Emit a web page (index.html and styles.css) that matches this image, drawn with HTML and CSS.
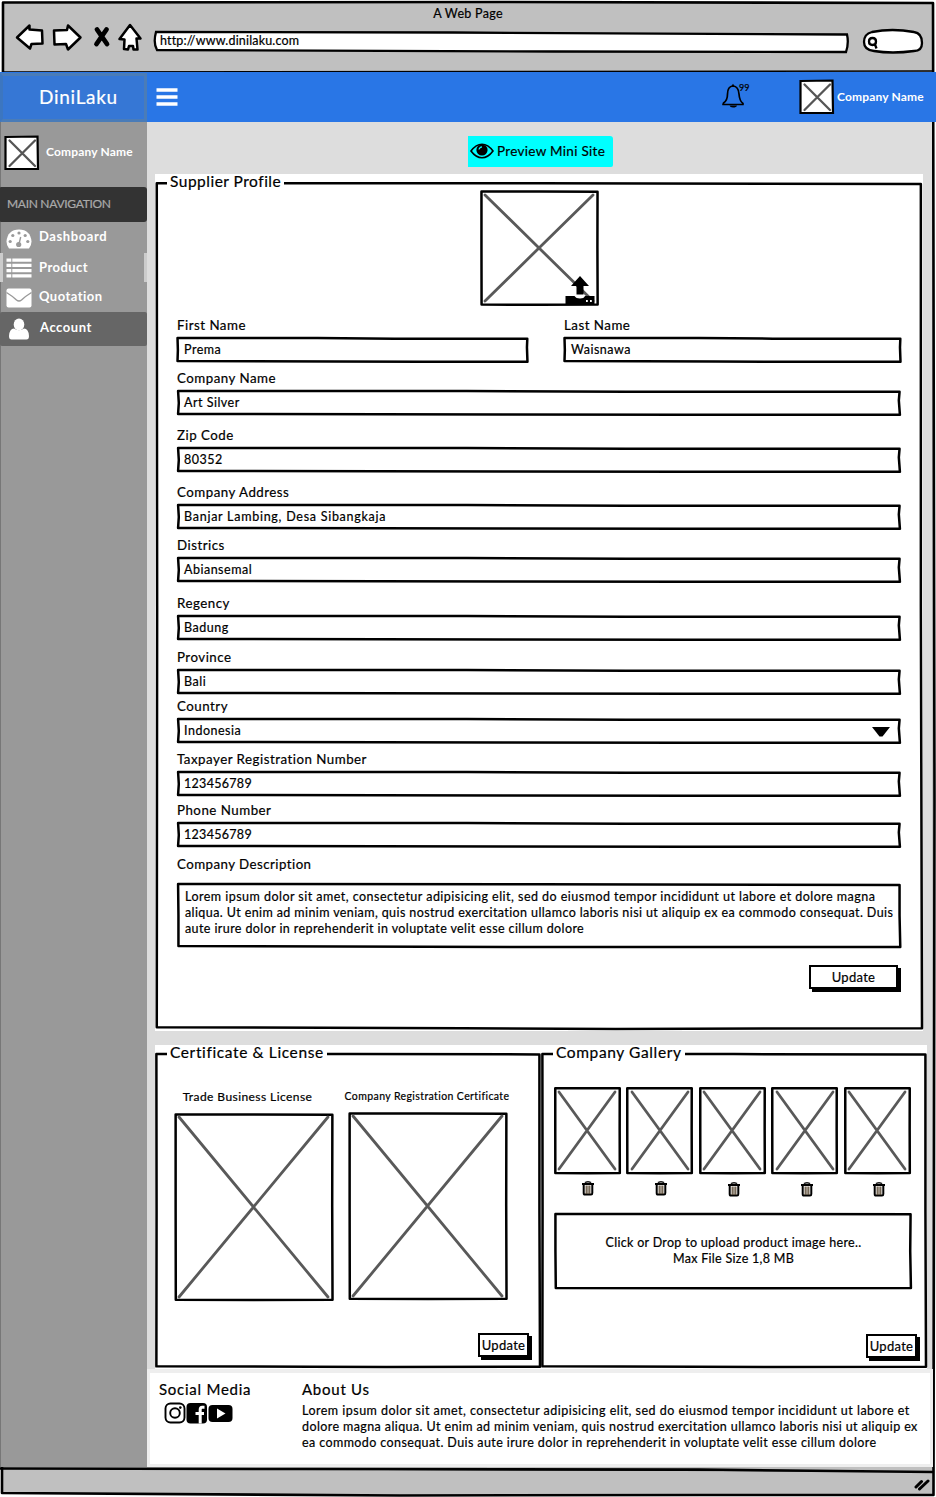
FILE: index.html
```html
<!DOCTYPE html>
<html lang="en">
<head>
<meta charset="utf-8">
<title>A Web Page</title>
<link rel="stylesheet" href="styles.css">
</head>
<body>
<svg class="defs" aria-hidden="true">
  <symbol id="field" viewBox="0 0 100 100" preserveAspectRatio="none">
    <path class="ink" d="M.15 4L40 4L62 6.500L99.800 7L99.700 40L99.850 95.500L70 95.500L45 94L.15 92L.25 50Z"/>
  </symbol>
  <symbol id="box" viewBox="0 0 100 100" preserveAspectRatio="none">
    <path class="ink" d="M.4 1.300L50 1.300L99.600 1.500L99.500 50L99.700 98.800L50 99L.5 98.800L.4 50Z"/>
  </symbol>
  <symbol id="wide" viewBox="0 0 100 100" preserveAspectRatio="none">
    <path class="ink" d="M.15 1.500L50 2L99.800 3L99.800 50L99.900 98.500L50 98.500L.2 97L.2 50Z"/>
  </symbol>
  <symbol id="frame" viewBox="0 0 100 100" preserveAspectRatio="none">
    <path class="ink" d="M.1 .03L50 .03L99.850 .12L99.850 50L100 99.900L60 100L40 99.900L.1 99.800L.15 50Z"/>
  </symbol>
  <symbol id="cross" viewBox="0 0 100 100" preserveAspectRatio="none">
    <path class="ink grey" d="M0 0L100 100M100 0L0 100"/>
  </symbol>
  <symbol id="trash" viewBox="0 0 14 15">
    <path d="M4.500 3V1.300Q7 .1 9.500 1.300V3" fill="none" stroke="#222" stroke-width="1.400"/>
    <path d="M1 3H13M2.700 4V12Q2.700 13.600 4 13.600H10Q11.300 13.600 11.300 12V4" fill="none" stroke="#000" stroke-width="2"/>
    <path d="M5.200 4.500V13M7 4.500V13M8.800 4.500V13" stroke="#4a3820" stroke-width="1.100"/>
  </symbol>
</svg>

<div class="window">
  <svg class="window-frame" viewBox="0 0 936 1497">
    <path d="M3 2.500L500 2L933 3L934.500 800L933.500 1495L700 1495L400 1495.500L2 1493Z" fill="#c0c0c0" stroke="#000" stroke-width="2.600" stroke-linejoin="round"/>
    <path d="M2 72L933 71" stroke="#000" stroke-width="1.500"/>
    <path d="M0 1468.500L300 1469L700 1469.500L934 1472" stroke="#000" stroke-width="2.500"/>
  </svg>

  <div class="chrome">
    <div class="chrome-title">A Web Page</div>
    <div class="toolbar">
      <svg class="nav-icons" viewBox="0 0 130 32">
        <g fill="#fff" stroke="#000" stroke-width="2.500" stroke-linejoin="round">
          <path d="M2 16.500L14.500 4.500V8.500L27 9.500L27.500 22.500L16.500 23L15 27.500Z"/>
          <path d="M39 9.500L52 9L53 4.500L65.500 16.500L53 28.500L51 23L39.500 23.500Z"/>
          <path d="M115 4L125.500 17.500H121.500L122.500 28.500H118.500L118 25H114L113 28.500L109 28L109.500 18.500L104.500 18Z"/>
        </g>
        <path d="M82 8.500L92 23M91.500 8.500L81.500 23" stroke="#000" stroke-width="4.800" stroke-linecap="round"/>
      </svg>
      <div class="url">
        <svg class="outline" viewBox="0 0 696 22" preserveAspectRatio="none"><path d="M3 1L300 1.500L694 3.500Q696 12 693 21L400 20.500L4 19Q0 12 3 1Z" fill="#fff" stroke="#000" stroke-width="2.300"/></svg>
        <span>http://www.dinilaku.com</span>
      </div>
      <svg class="search" viewBox="0 0 62 26">
        <path d="M10 4Q30 0 52 4Q60 5 60 15Q60 23 52 23Q30 26 12 23Q2 22 2 14Q2 6 10 4Z" fill="#fff" stroke="#000" stroke-width="2.300"/>
        <path d="M7 13.500Q7 10 10.500 10Q14 10 14 13.500Q14 17 10.500 17Q7 17 7 13.500ZM13 16.500L14.500 20.500" fill="none" stroke="#000" stroke-width="2.300"/>
      </svg>
    </div>
  </div>

  <header class="topbar">
    <div class="brand">DiniLaku</div>
    <svg class="burger" viewBox="0 0 22 18"><path d="M.5 2H21.500M.5 9H21.500M.5 16H21.500" stroke="#fff" stroke-width="3.400"/></svg>
    <svg class="bell" viewBox="0 0 30 28">
      <path d="M2.500 20Q6.500 17.500 6.500 11Q6.500 3.500 12 3Q17.500 3.500 18 11Q18.500 18 22 20.500L22 21.500L2 21.500Z" fill="none" stroke="#000" stroke-width="1.700" stroke-linejoin="round"/>
      <path d="M10.500 3L12 .8L13.500 3ZM8.500 22.500H16Q15.500 24.500 12 24.500Q9 24.500 8.500 22.500Z"/>
    </svg>
    <span class="count">99</span>
    <svg class="avatar" viewBox="0 0 36 36"><path d="M1.500 2L33.500 1.500L34 34L1.500 34Z" fill="#fff" stroke="#000" stroke-width="2.200"/><path d="M5.500 5.500L31 31M31 5.500L5.500 31" stroke="#555" stroke-width="2.300" stroke-linecap="round"/></svg>
    <span class="user">Company Name</span>
  </header>

  <div class="body">
    <aside class="sidebar">
      <div class="profile">
        <svg class="avatar" viewBox="0 0 36 36"><path d="M1.500 2L33.500 1.500L34 34L1.500 34Z" fill="#fff" stroke="#000" stroke-width="2.200"/><path d="M5.500 5.500L31 31M31 5.500L5.500 31" stroke="#555" stroke-width="2.300" stroke-linecap="round"/></svg>
        <span class="user">Company Name</span>
      </div>
      <div class="nav-title">MAIN NAVIGATION</div>
      <nav>
        <a class="item dash"><svg viewBox="0 0 26 20"><path d="M3 19.500Q.5 16.500 .5 12.500Q1.500 .8 13 .5Q24.500 .8 25.500 12.500Q25.500 16.500 23 19.500Z" fill="#fff"/><g fill="#999"><circle cx="4.200" cy="12.500" r="1.600"/><circle cx="6.800" cy="6.500" r="1.600"/><circle cx="13" cy="4" r="1.600"/><circle cx="19.200" cy="6.500" r="1.600"/><circle cx="21.800" cy="12.500" r="1.600"/><circle cx="12.700" cy="15.500" r="2.600"/></g><path d="M13 15L14.700 8" stroke="#999" stroke-width="1.400"/></svg><span>Dashboard</span></a>
        <a class="item prod"><svg viewBox="0 0 26 20"><path d="M.5 2.200H25.500M.5 7.400H25.500M.5 12.600H25.500M.5 17.800H25.500" stroke="#fff" stroke-width="3.300"/><path d="M5.800 0V20" stroke="#999" stroke-width="1"/></svg><span>Product</span></a>
        <a class="item quot"><svg viewBox="0 0 26 20"><rect x=".5" y=".5" width="25" height="19" rx="2" fill="#fff"/><path d="M.5 4.500Q7 8.500 10.500 12Q13 14 15.500 12Q19 8.500 25.500 4.500" fill="none" stroke="#999" stroke-width="1.400"/></svg><span>Quotation</span></a>
        <a class="item acct"><svg viewBox="0 0 22 22"><path d="M3.500 21.500Q1 21.500 1 18Q1.500 10.500 6 10.500Q11 14 16 10.500Q20.500 10.500 21 18Q21 21.500 18.500 21.500Z" fill="#fff"/><ellipse cx="11" cy="6.500" rx="5.300" ry="6" fill="#fff"/></svg><span>Account</span></a>
      </nav>
    </aside>

    <main>
      <button class="preview"><svg viewBox="0 0 24 16"><path d="M1 8Q6 1.200 12 1.200Q18 1.200 23 8Q18 14.800 12 14.800Q6 14.800 1 8Z" fill="none" stroke="#000" stroke-width="1.600"/><circle cx="12" cy="7" r="5.600"/><path d="M9 6.500Q9.500 4 12 3.800" fill="none" stroke="#0ff" stroke-width="1.200"/></svg><span>Preview Mini Site</span></button>

      <section class="panel supplier">
        <svg class="outline"><use href="#frame"/></svg>
        <h2>Supplier Profile</h2>
        <div class="photo">
          <svg class="outline"><use href="#box"/></svg><svg class="x"><use href="#cross"/></svg>
          <svg class="upload" viewBox="0 0 30 30"><path d="M15 0L24 10H18.500V18.500H11.500V10H6Z"/><path d="M.5 20H9.500Q11 22.500 15 22.500Q19 22.500 20 20H29.500V28.500H.5Z"/><path d="M21 25H22.800M25 25H26.800" stroke="#fff" stroke-width="2"/></svg>
        </div>
        <form>
          <div class="pair">
            <label class="fld"><b>First Name</b><span class="in"><svg class="outline"><use href="#field"/></svg><i>Prema</i></span></label>
            <label class="fld"><b>Last Name</b><span class="in"><svg class="outline"><use href="#field"/></svg><i>Waisnawa</i></span></label>
          </div>
          <label class="fld g7"><b>Company Name</b><span class="in"><svg class="outline"><use href="#field"/></svg><i>Art Silver</i></span></label>
          <label class="fld g11"><b>Zip Code</b><span class="in"><svg class="outline"><use href="#field"/></svg><i>80352</i></span></label>
          <label class="fld g11"><b>Company Address</b><span class="in"><svg class="outline"><use href="#field"/></svg><i class="loose">Banjar Lambing, Desa Sibangkaja</i></span></label>
          <label class="fld g7"><b>Districs</b><span class="in"><svg class="outline"><use href="#field"/></svg><i>Abiansemal</i></span></label>
          <label class="fld g12"><b>Regency</b><span class="in"><svg class="outline"><use href="#field"/></svg><i>Badung</i></span></label>
          <label class="fld g8"><b>Province</b><span class="in"><svg class="outline"><use href="#field"/></svg><i>Bali</i></span></label>
          <label class="fld g3"><b>Country</b><span class="in"><svg class="outline"><use href="#field"/></svg><i>Indonesia</i><svg class="caret" viewBox="0 0 18 10"><path d="M0 0H18L10.500 9.500H7.500Z"/></svg></span></label>
          <label class="fld g7"><b>Taxpayer Registration Number</b><span class="in"><svg class="outline"><use href="#field"/></svg><i class="num">123456789</i></span></label>
          <label class="fld g5"><b>Phone Number</b><span class="in"><svg class="outline"><use href="#field"/></svg><i class="num">123456789</i></span></label>
          <label class="fld g8 desc"><b>Company Description</b><span class="in area"><svg class="outline"><use href="#wide"/></svg><i class="para"><span class="first">Lorem ipsum dolor sit amet, consectetur adipisicing elit, sed do eiusmod tempor incididunt ut labore et dolore magna</span><br>aliqua. Ut enim ad minim veniam, quis nostrud exercitation ullamco laboris nisi ut aliquip ex ea commodo consequat. Duis<br>aute irure dolor in reprehenderit in voluptate velit esse cillum dolore</i></span></label>
          <button type="button" class="update">Update</button>
        </form>
      </section>

      <div class="lower">
        <section class="panel cert">
          <svg class="outline"><use href="#frame"/></svg>
          <h2>Certificate &amp; License</h2>
          <div class="docs">
            <figure><figcaption class="trade">Trade Business License</figcaption><div class="doc"><svg class="outline"><use href="#box"/></svg><svg class="x"><use href="#cross"/></svg></div></figure>
            <figure class="up"><figcaption class="small">Company Registration Certificate</figcaption><div class="doc"><svg class="outline"><use href="#box"/></svg><svg class="x"><use href="#cross"/></svg></div></figure>
          </div>
          <button type="button" class="update">Update</button>
        </section>
        <section class="panel gallery">
          <svg class="outline"><use href="#frame"/></svg>
          <h2>Company Gallery</h2>
          <div class="thumbs">
            <div class="thumb"><div class="pic"><svg class="outline"><use href="#box"/></svg><svg class="x"><use href="#cross"/></svg></div><svg class="bin"><use href="#trash"/></svg></div>
            <div class="thumb"><div class="pic"><svg class="outline"><use href="#box"/></svg><svg class="x"><use href="#cross"/></svg></div><svg class="bin"><use href="#trash"/></svg></div>
            <div class="thumb low"><div class="pic"><svg class="outline"><use href="#box"/></svg><svg class="x"><use href="#cross"/></svg></div><svg class="bin"><use href="#trash"/></svg></div>
            <div class="thumb low"><div class="pic"><svg class="outline"><use href="#box"/></svg><svg class="x"><use href="#cross"/></svg></div><svg class="bin"><use href="#trash"/></svg></div>
            <div class="thumb low"><div class="pic"><svg class="outline"><use href="#box"/></svg><svg class="x"><use href="#cross"/></svg></div><svg class="bin"><use href="#trash"/></svg></div>
          </div>
          <div class="drop"><svg class="outline"><use href="#box"/></svg><p>Click or Drop to upload product image here..<br>Max File Size 1,8 MB</p></div>
          <button type="button" class="update">Update</button>
        </section>
      </div>

      <footer>
        <div class="social">
          <h3>Social Media</h3>
          <div class="logos">
            <svg viewBox="0 0 22 22"><rect x="1.500" y="1.500" width="19" height="19" rx="5" fill="none" stroke="#000" stroke-width="1.900"/><circle cx="11" cy="11" r="4.800" fill="none" stroke="#000" stroke-width="1.900"/><circle cx="16.300" cy="5.600" r="1.300"/></svg>
            <svg viewBox="0 0 22 22"><rect x=".5" y="1" width="20.500" height="20.500" rx="4"/><path d="M18.500 5.200H16.200Q14.200 5.200 14.200 7.500V21.500M9.500 11.500H18" fill="none" stroke="#fff" stroke-width="3"/></svg>
            <svg class="yt" viewBox="0 0 25 22"><rect x=".5" y="3" width="24" height="17" rx="4"/><path d="M9 6.500V16.500L17.500 11.500Z" fill="#fff"/></svg>
          </div>
        </div>
        <div class="about">
          <h3>About Us</h3>
          <p><span class="first">Lorem ipsum dolor sit amet, consectetur adipisicing elit, sed do eiusmod tempor incididunt ut labore et</span><br>dolore magna aliqua. Ut enim ad minim veniam, quis nostrud exercitation ullamco laboris nisi ut aliquip ex<br>ea commodo consequat. Duis aute irure dolor in reprehenderit in voluptate velit esse cillum dolore</p>
        </div>
      </footer>
    </main>
  </div>

  <div class="statusbar"><svg viewBox="0 0 18 14"><path d="M3 10L8.500 4.500M6.500 12L15 4" stroke="#000" stroke-width="3" stroke-linecap="round"/></svg></div>
</div>
</body>
</html>
```
FILE: styles.css
```css
* { box-sizing: border-box; }
body { margin: 0; font-family: Lato, "Liberation Sans", sans-serif; font-size: 13px; letter-spacing: .3px; color: #000; -webkit-text-stroke: .2px currentColor; }
h2, h3, p, figure { margin: 0; font-weight: 400; }
b, i { font-weight: 400; font-style: normal; }
svg { display: block; flex: none; }
button { font: inherit; letter-spacing: inherit; color: inherit; border: 0; padding: 0; -webkit-text-stroke: inherit; }
span, i, b, h2, h3, figcaption { white-space: nowrap; }
.defs { position: absolute; width: 0; height: 0; }
.ink { fill: none; stroke: #000; stroke-width: 2.5px; stroke-linejoin: round; stroke-linecap: round; vector-effect: non-scaling-stroke; }
.grey { stroke: #595959; stroke-width: 2.8px; }
.outline { position: absolute; inset: 0; width: 100%; height: 100%; overflow: visible; }
symbol, .x { overflow: visible; }

/* Browser window */
.window { position: relative; width: 936px; height: 1497px; display: flex; flex-direction: column; overflow: hidden; background: #fff; }
.window-frame { position: absolute; inset: 0; width: 936px; height: 1497px; }
.chrome, .topbar, .body, .statusbar { position: relative; }
.chrome { height: 72px; padding: 5px 12px 0 15px; }
.chrome-title { text-align: center; height: 16px; line-height: 17px; font-size: 12.5px; padding-right: 3px; }
.toolbar { display: flex; align-items: flex-start; }
.nav-icons { width: 130px; height: 32px; }
.url { position: relative; width: 696px; height: 22px; margin: 10px 0 0 8px; padding-left: 7px; }
.url span { position: relative; line-height: 19px; font-size: 12.5px; letter-spacing: .17px; }
.search { width: 62px; height: 26px; margin: 7px 0 0 13px; }

/* Top bar */
.topbar { height: 50px; display: flex; align-items: center; background: #2976e6; color: #fff; }
.brand { width: 147px; height: 49px; border: 3px solid #4a7cb8; background: #3677d5; border-left-color: #3c76c0; line-height: 42px; padding-left: 36px; font-size: 19px; letter-spacing: .7px; }
.burger { width: 22px; height: 18px; margin-left: 9px; }
.bell { width: 30px; height: 28px; margin-left: 543px; }
.count { width: 12px; margin: -20px 0 0 -12px; font-size: 9px; letter-spacing: .1px; color: #000; }
.avatar { width: 36px; height: 36px; }
.topbar .avatar { margin-left: 48px; }
.user { font-size: 12px; letter-spacing: .17px; font-weight: 700; -webkit-text-stroke: 0; margin-top: -2px; }
.topbar .user { margin-left: 2px; }

/* Sidebar */
.body { height: 1345px; display: flex; }
.sidebar { width: 147px; background: linear-gradient(90deg, #777 0 1px, #999 1px); color: #fff; }
.profile { display: flex; align-items: center; height: 65px; padding: 0 0 4px 4px; }
.profile .user { margin-left: 6px; }
.nav-title { height: 35px; line-height: 34px; background: #333; color: #aaa; padding-left: 7px; font-size: 12px; letter-spacing: -.3px; border-radius: 1px 3px 3px 1px; }
.item { display: flex; align-items: center; font-size: 13px; font-weight: 700; letter-spacing: .45px; padding-left: 6px; -webkit-text-stroke: 0; }
.item svg { width: 26px; height: 20px; }
.item span { margin: -2px 0 0 7px; }
.dash { height: 31px; }
.dash span { margin-top: -3px; letter-spacing: .6px; }
.dash svg { margin-top: 2px; }
.prod { height: 29px; border: solid #ccc; border-width: 0 3px; padding-left: 3px; }
.quot { height: 29px; }
.quot svg { margin-top: 3px; }
.acct { height: 34px; margin-top: 1px; background: #666; padding-left: 8px; border-radius: 2px; }
.acct svg { width: 22px; height: 22px; }
.item.acct span { margin: -4px 0 0 10px; letter-spacing: .55px; }

/* Content */
main { width: 785px; background: #ddd; padding-top: 14px; }
.preview { display: flex; align-items: center; width: 145px; height: 31px; margin-left: 321px; padding: 0 0 1px 2px; background: #0ff; border-radius: 0 3px 2px 0; font-size: 13.5px; }
.preview svg { width: 24px; height: 16px; margin-right: 3px; }

.panel { position: relative; background: #fff; }
.panel > .outline { inset: 9px 1px 1px 1px; width: calc(100% - 2px); height: calc(100% - 11px); }
.panel h2 { position: relative; width: max-content; height: 16px; line-height: 15px; margin-left: 12px; padding: 0 3px; background: #fff; font-size: 15.5px; letter-spacing: .62px; }
.supplier h2 { letter-spacing: .5px; }
.supplier { width: 768px; height: 857px; margin: 7px 0 0 8px; }
.photo { position: relative; width: 118px; height: 116px; margin: 0 0 0 325px; }
.photo > .outline, .doc > .outline, .pic > .outline { inset: 0 .5px; width: calc(100% - 1px); }
.x { position: absolute; inset: 5px; width: calc(100% - 10px); height: calc(100% - 10px); }
.upload { position: absolute; right: 3px; bottom: 0; width: 30px; height: 30px; }
form { padding: 11px 0 0 22px; width: 746px; }
.pair { display: flex; gap: 36px; }
.pair .fld:first-child { width: 351px; }
.pair .fld:last-child { width: 337px; }
.fld { display: block; width: 724px; }
.fld b { display: block; height: 16px; line-height: 16px; margin-bottom: 4px; font-size: 13.3px; letter-spacing: .5px; }
.in { position: relative; display: block; height: 26px; padding-left: 7px; }
.in i { position: relative; display: block; line-height: 25px; font-size: 12.5px; letter-spacing: .5px; }
.in .num { letter-spacing: .3px; }
.in .loose { letter-spacing: .74px; }
.g3 { margin-top: 3px; } .g5 { margin-top: 5px; } .g7 { margin-top: 7px; } .g8 { margin-top: 8px; } .g11 { margin-top: 11px; } .g12 { margin-top: 12px; }
.caret { position: absolute; right: 11px; top: 9px; width: 18px; height: 10px; }
.fld.desc b { margin-bottom: 11px; letter-spacing: .45px; }
.area { height: 65px; padding: 6px 0 0 8px; }
.in .para { line-height: 16px; letter-spacing: .4px; }
.para .first { letter-spacing: .47px; }
.about p { font-size: 12.5px; letter-spacing: .4px; }
.about .first { letter-spacing: .48px; }
.update { display: block; background: #fff; border: 2px solid #000; box-shadow: 3px 3px 0 #000; line-height: 19px; text-align: center; font-size: 13px; }
form .update { width: 89px; height: 24px; margin: 17px 0 0 632px; }

.lower { display: flex; width: 772px; height: 324px; margin: 14px 0 0 8px; }
.cert, .gallery { width: 386px; height: 324px; }
.docs { display: flex; gap: 15px; padding: 28px 0 0 19px; }
figure { width: 159px; }
figcaption { height: 16px; line-height: 16px; margin-bottom: 7px; font-size: 12px; text-align: center; }
.trade { letter-spacing: .43px; padding-right: 12px; }
.small { display: flex; justify-content: center; font-size: 10.5px; letter-spacing: .4px; padding-right: 1px; }
.up .small { line-height: 15px; margin-bottom: 6px; }
.doc { position: relative; height: 190px; }
.lower .update { width: 51px; height: 24px; }
.cert .update { margin: 31px 0 0 323px; }
.thumbs { display: flex; gap: 6.5px; padding: 26px 0 0 13px; }
.thumb { width: 66px; display: flex; flex-direction: column; align-items: center; }
.pic { position: relative; width: 66px; height: 87px; }
.bin { width: 14px; height: 15px; margin: 7px 0 1px 2px; }
.low .bin { margin: 8px 0 0 4px; }
.drop { position: relative; width: 358px; height: 76px; margin: 16px 0 0 13px; padding: 22px 0 0 1px; text-align: center; line-height: 16px; font-size: 12.5px; }
.drop p { position: relative; }
.gallery .update { margin: 45px 0 0 325px; }

/* Footer */
footer { display: flex; width: 786px; height: 98px; background: #fff; border: 3px solid #eee; border-top-width: 4px; }
.social { width: 143px; padding: 8px 0 0 9px; }
.about { padding-top: 8px; margin-left: 9px; }
h3 { height: 18px; line-height: 17px; font-size: 15px; letter-spacing: .75px; }
.about p { line-height: 16px; margin-top: 4px; white-space: nowrap; }
.logos { display: flex; margin: 3px 0 0 5px; }
.logos svg { width: 22px; height: 22px; }
.logos .yt { width: 25px; }
.statusbar { height: 30px; display: flex; justify-content: flex-end; padding: 10px 5px 0 0; }
.statusbar svg { width: 18px; height: 14px; }
```
